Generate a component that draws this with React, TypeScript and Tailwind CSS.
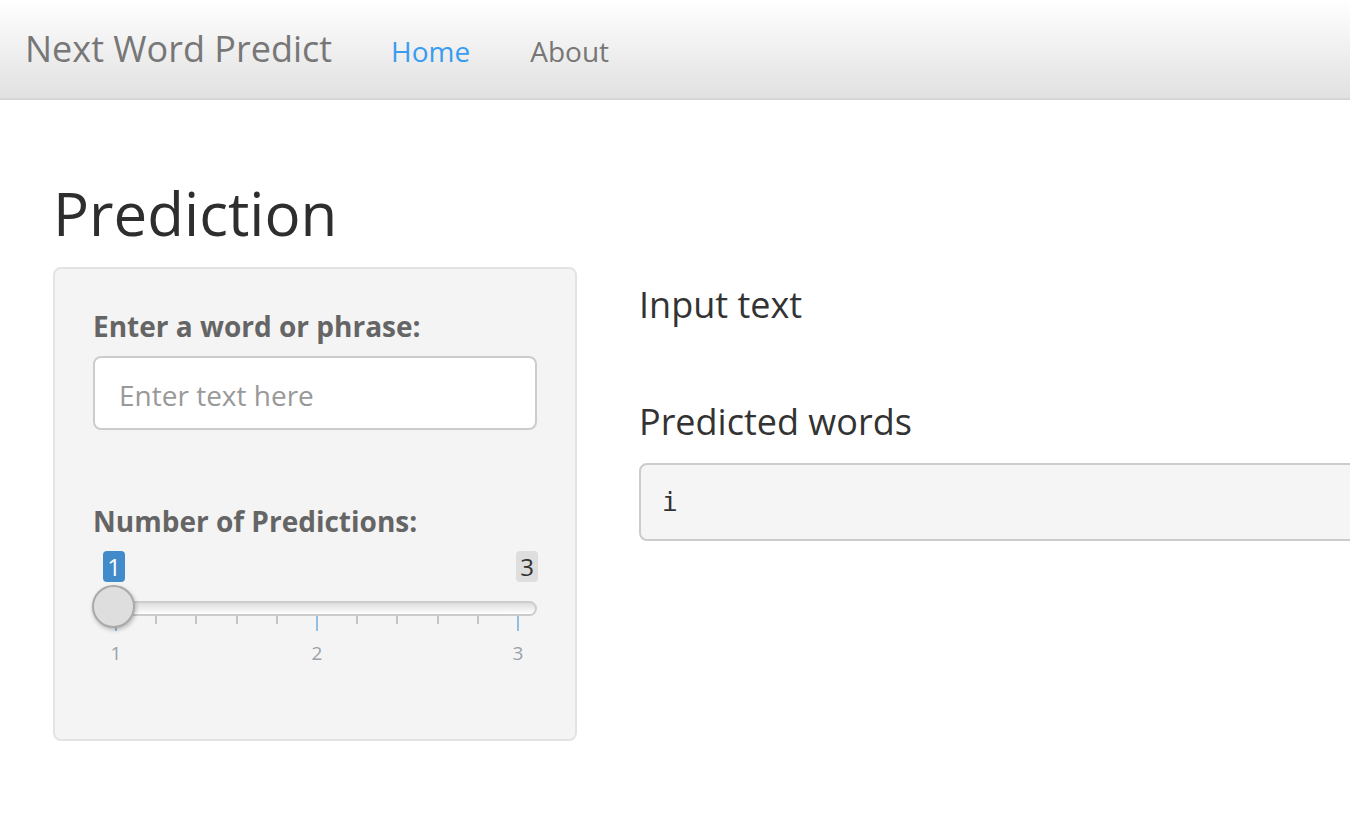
import React from 'react';

// 11 ticks evenly spread between the min and max of the slider, every 5th is a major one
const ticks = Array.from({ length: 11 }, (_, i) => i % 5 === 0);

function Slider() {
  return (
    <div className="w-[445px]">
      {/* value badges */}
      <div className="flex h-[31px] justify-between pl-[10px]">
        <span className="flex w-[22px] items-center justify-center rounded-[4px] bg-[#428bca] text-[24px] leading-none text-white">
          1
        </span>
        <span className="flex w-[22px] items-center justify-center rounded-[4px] bg-[#dedede] text-[24px] leading-none text-[#333]">
          3
        </span>
      </div>

      {/* track with the handle over it */}
      <div className="relative mt-[19px] w-[444px]">
        <div className="h-[15px] rounded-full border-2 border-[#cccccc] bg-gradient-to-b from-[#dddddd] to-[#ffffff]" />
        <div className="absolute left-[-1px] top-[-16px] h-[43px] w-[43px] rounded-full border-2 border-[#aaaaaa] bg-[#dedede] shadow-[1px_2px_4px_rgba(0,0,0,0.25)]" />
      </div>

      {/* grid ticks */}
      <div className="ml-[22px] flex w-[404px] items-start justify-between">
        {ticks.map((major, i) => (
          <span
            key={i}
            className={major ? 'h-[15px] w-[2px] bg-[#95bde0]' : 'h-[8px] w-[2px] bg-[#c4c4c4]'}
          />
        ))}
      </div>

      {/* grid labels */}
      <div className="ml-[13px] mt-[10px] flex w-[422px] justify-between text-[19px] leading-[24px] text-[#9aa2ab]">
        <span className="w-[20px] text-center">1</span>
        <span className="w-[20px] text-center">2</span>
        <span className="w-[20px] text-center">3</span>
      </div>
    </div>
  );
}

export default function App() {
  return (
    <div className="min-h-[830px] w-full overflow-hidden bg-white font-['Open_Sans',sans-serif] text-[#333]">
      {/* Navbar */}
      <nav className="flex h-[100px] items-baseline border-b-2 border-[#d6d6d6] bg-gradient-to-b from-[#ffffff] to-[#e1e1e1] pl-[25px] pt-[29px]">
        <span className="text-[36px] leading-[40px] text-[#777]">Next Word Predict</span>
        <a className="ml-[59px] text-[28px] leading-[40px] text-[#3a9cf0]">Home</a>
        <a className="ml-[60px] text-[28px] leading-[40px] text-[#777]">About</a>
      </nav>

      <div className="pl-[53px]">
        <h2 className="mt-[80px] text-[60px] font-normal leading-[66px] text-[#2e2e2e]">Prediction</h2>

        <div className="mt-[21px] flex w-[1400px] items-start gap-[62px]">
          {/* sidebar */}
          <div className="h-[474px] w-[524px] shrink-0 rounded-[8px] border-2 border-[#e3e3e3] bg-[#f4f4f4] px-[38px] pt-[37px]">
            <label className="block text-[28px] font-bold leading-[40px] text-[#656565]">
              Enter a word or phrase:
            </label>
            <input
              type="text"
              placeholder="Enter text here"
              className="mt-[10px] block h-[74px] w-[444px] rounded-[8px] border-2 border-[#cccccc] bg-white px-[24px] pt-[3px] text-[28px] text-[#555] outline-none placeholder:text-[#999]"
            />
            <label className="mt-[71px] block text-[28px] font-bold leading-[40px] text-[#656565]">
              Number of Predictions:
            </label>
            <div className="mt-[10px]">
              <Slider />
            </div>
          </div>

          {/* main */}
          <div className="w-[760px] shrink-0 pt-[18px]">
            <h4 className="text-[36px] leading-[40px] text-[#333]">Input text</h4>
            <h4 className="mt-[77px] text-[36px] leading-[40px] text-[#333]">Predicted words</h4>
            <pre className="mt-[21px] rounded-[8px] border-2 border-[#cccccc] bg-[#f5f5f5] px-[21px] py-[20px] font-['DejaVu_Sans_Mono',monospace] text-[26px] leading-[34px] text-[#333]">
              i
            </pre>
          </div>
        </div>
      </div>
    </div>
  );
}
